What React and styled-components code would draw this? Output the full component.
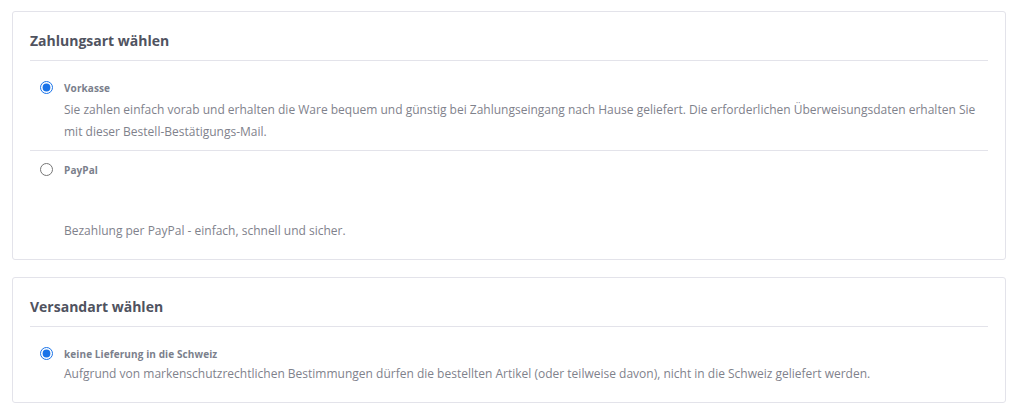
import React from 'react';
import styled, { createGlobalStyle } from 'styled-components';

const GlobalStyle = createGlobalStyle`
  body {
    margin: 0;
    background: #fff;
    font-family: "Open Sans", "Liberation Sans", sans-serif;
  }
`;

const Page = styled.div`
  display: flex;
  flex-direction: column;
  gap: 17px;
  padding: 11px 18px 0 12px;
`;

const Card = styled.section`
  border: 1px solid #e3e3ea;
  border-radius: 3px;
  padding: 0 17px 0 17px;
`;

const Title = styled.h2`
  margin: 0;
  padding: 18px 0 9px;
  font-size: 14px;
  line-height: 21px;
  font-weight: 700;
  color: #50535f;
  border-bottom: 1px solid #e3e3ea;
`;

const Option = styled.div`
  display: grid;
  grid-template-columns: 34px 1fr;
  padding: ${p => (p.$first ? '19px' : '11px')} 0 ${p => p.$pad || '7px'};
  border-top: ${p => (p.$first ? 'none' : '1px solid #e3e3ea')};
`;

const Radio = styled.input.attrs({ type: 'radio' })`
  margin: 1px 0 0 10px;
  width: 13px;
  height: 13px;
  accent-color: #1a73e8;
`;

const Label = styled.label`
  font-size: 10px;
  line-height: 16px;
  font-weight: 700;
  letter-spacing: 0.1px;
  color: #7b7f8c;
`;

const Description = styled.p`
  grid-column: 2;
  margin: ${p => p.$gap || '3px'} 0 0;
  font-size: 12px;
  line-height: 22px;
  color: #7f828c;
`;

export default function App() {
  return (
    <>
      <GlobalStyle />
      <Page>
        <Card>
          <Title>Zahlungsart wählen</Title>
          <Option $first>
            <Radio name="pay" defaultChecked />
            <Label>Vorkasse</Label>
            <Description>
              Sie zahlen einfach vorab und erhalten die Ware bequem und günstig bei Zahlungseingang nach Hause geliefert. Die erforderlichen Überweisungsdaten erhalten Sie mit dieser Bestell-Bestätigungs-Mail.
            </Description>
          </Option>
          <Option $pad="17px">
            <Radio name="pay" />
            <Label>PayPal</Label>
            <Description $gap="42px">Bezahlung per PayPal - einfach, schnell und sicher.</Description>
          </Option>
        </Card>
        <Card>
          <Title>Versandart wählen</Title>
          <Option $first $pad="17px">
            <Radio name="ship" defaultChecked />
            <Label>keine Lieferung in die Schweiz</Label>
            <Description $gap="1px">
              Aufgrund von markenschutzrechtlichen Bestimmungen dürfen die bestellten Artikel (oder teilweise davon), nicht in die Schweiz geliefert werden.
            </Description>
          </Option>
        </Card>
      </Page>
    </>
  );
}
